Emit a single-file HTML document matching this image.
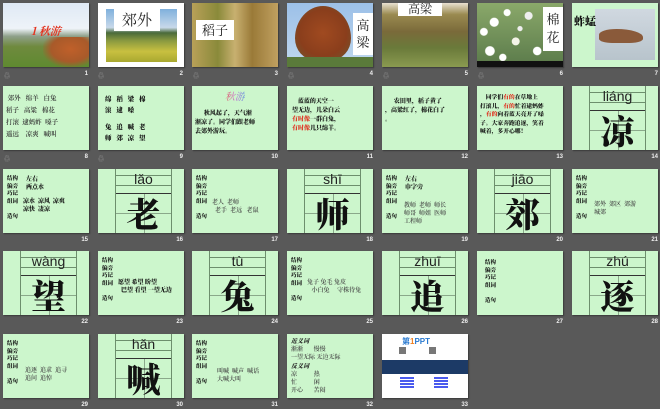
<!DOCTYPE html>
<html><head><meta charset="utf-8">
<style>
*{margin:0;padding:0;box-sizing:border-box}
body{width:660px;height:409px;background:#595959;position:relative;overflow:hidden;font-family:"Liberation Sans","Noto Sans CJK SC",sans-serif}
.s{position:absolute;width:86px;height:64px;overflow:hidden;box-shadow:1px 1px 1px #3a3a3a}
.g{background:#ccf6cc}
.n{position:absolute;width:86px;text-align:right;font-size:6px;color:#eee;font-weight:bold}
.ic{position:absolute;font-size:6px;color:#bbb}
.tz{position:absolute;left:17px;width:57px;top:0;bottom:0;border-left:1px solid #6d8f6d;border-right:1px solid #6d8f6d;
background:linear-gradient(#6d8f6d,#6d8f6d) 0 6px/100% 1px no-repeat,linear-gradient(#6d8f6d,#6d8f6d) 0 16px/100% 1px no-repeat,linear-gradient(#333,#333) 0 24px/100% 1px no-repeat,linear-gradient(#8aa88a,#8aa88a) 28px 24px/1px 40px no-repeat,linear-gradient(#8aa88a,#8aa88a) 0 44px/100% 1px no-repeat}
.py{position:absolute;top:3px;width:100%;text-align:center;font-size:14px;line-height:14px;color:#222}
.ch{position:absolute;top:24px;width:100%;text-align:center;font-size:34px;line-height:40px;font-family:"Noto Serif CJK SC","Noto Sans CJK SC",serif;font-weight:900;color:#111}
.inf{position:absolute;left:4px;top:6px;font-size:5.5px;line-height:7.5px;font-weight:900;font-family:"Noto Serif CJK SC",serif;color:#111}
.t{position:absolute;font-size:6px;line-height:7.5px;color:#444;font-family:"Noto Serif CJK SC",serif;white-space:nowrap;font-weight:600}
.b{color:#111;font-weight:900}
.r{color:#e02a1a}
.lab{position:absolute;background:#fff;font-family:"Noto Serif CJK SC",serif;color:#222;text-align:center}
</style></head><body>

<!-- Row 0 -->
<div class="s" style="left:3px;top:3px;background:linear-gradient(#dfe9f5 0%,#eef3f8 40%,#8fa08a 52%,#6f8a3e 68%,#5f8a30 100%)">
 <div style="position:absolute;left:40px;top:34px;width:46px;height:30px;background:radial-gradient(ellipse at 60% 40%,#c0602a,#a85a2a 50%,transparent 75%)"></div>
 <div style="position:absolute;left:0;top:20px;width:86px;text-align:center;font-size:11px;font-weight:bold;font-style:italic;color:#e3331f;font-family:'Noto Serif CJK SC',serif">1 秋游</div>
</div>
<div class="ic" style="left:4px;top:71px">♲</div><div class="n" style="left:2px;top:71px">1</div>

<div class="s" style="left:98px;top:3px;background:#fff">
 <div style="position:absolute;left:8px;top:6px;width:71px;height:53px;background:linear-gradient(#7fb0dc 0%,#c8d9ea 35%,#4a6a3a 45%,#8a9a40 60%,#c8c040 80%,#a8a830 100%)"></div>
 <div class="lab" style="left:16px;top:6px;width:46px;height:22px;font-size:15px;line-height:22px">郊外</div>
</div>
<div class="ic" style="left:98px;top:71px">♲</div><div class="n" style="left:97px;top:71px">2</div>

<div class="s" style="left:192px;top:3px;background:linear-gradient(90deg,#b8a058,#8a8a3a 30%,#c8b070 50%,#9a7a38 70%,#c0a060)">
 <div class="lab" style="left:4px;top:17px;width:38px;height:20px;font-size:13px;line-height:20px">稻子</div>
</div>
<div class="ic" style="left:193px;top:71px">♲</div><div class="n" style="left:192px;top:71px">3</div>

<div class="s" style="left:287px;top:3px;background:linear-gradient(#9cc0e8,#c0d8ee)">
 <div style="position:absolute;left:8px;top:3px;width:56px;height:54px;border-radius:50% 50% 35% 35%/60% 60% 40% 40%;background:radial-gradient(#a04a20,#8a3e1c 60%,#6a5a30)"></div>
 <div style="position:absolute;left:0;top:54px;width:86px;height:10px;background:#5a7a3a"></div>
 <div class="lab" style="left:66px;top:10px;width:20px;height:42px;font-size:13px;line-height:17px;padding-top:3px">高<br>梁</div>
</div>
<div class="ic" style="left:288px;top:71px">♲</div><div class="n" style="left:287px;top:71px">4</div>

<div class="s" style="left:382px;top:3px;background:linear-gradient(#e8e0d0 0%,#9a8a50 18%,#7a6a3a 45%,#6a7a3a 70%,#8a9a50 100%)">
 <div class="lab" style="left:16px;top:0;width:44px;height:13px;font-size:12px;line-height:12px">高梁</div>
</div>
<div class="ic" style="left:383px;top:71px">♲</div><div class="n" style="left:382px;top:71px">5</div>

<div class="s" style="left:477px;top:3px;background:radial-gradient(circle at 20% 30%,#fff 0 5%,transparent 6%),radial-gradient(circle at 45% 60%,#f4f4e8 0 6%,transparent 7%),radial-gradient(circle at 15% 75%,#fff 0 5%,transparent 6%),radial-gradient(circle at 60% 20%,#eee 0 5%,transparent 6%),radial-gradient(circle at 35% 15%,#fff 0 4%,transparent 5%),radial-gradient(circle at 70% 75%,#fff 0 5%,transparent 6%),radial-gradient(circle at 8% 45%,#fff 0 4%,transparent 5%),radial-gradient(circle at 50% 40%,#eee 0 4%,transparent 5%),radial-gradient(circle at 30% 85%,#fff 0 4%,transparent 5%),linear-gradient(#8aa86a,#5a7a4a)">
 <div style="position:absolute;left:0;top:58px;width:86px;height:6px;background:#111"></div>
 <div class="lab" style="left:66px;top:4px;width:20px;height:44px;font-size:13px;line-height:18px;padding-top:3px">棉<br>花</div>
</div>
<div class="ic" style="left:478px;top:71px">♲</div><div class="n" style="left:477px;top:71px">6</div>

<div class="s g" style="left:572px;top:3px">
 <div style="position:absolute;left:23px;top:6px;width:60px;height:51px;background:linear-gradient(#d0d8e0,#b8c4cc)"><div style="position:absolute;left:4px;top:20px;width:44px;height:14px;border-radius:40% 60% 30% 30%;background:#8a5a3a"></div></div>
 <div style="position:absolute;left:2px;top:10px;font-size:11px;font-weight:900;font-family:'Noto Serif CJK SC',serif;color:#111">蚱蜢</div>
</div>
<div class="n" style="left:572px;top:71px">7</div>

<!-- Row 1 -->
<div class="s g" style="left:3px;top:86px">
 <div class="t" style="left:3px;top:6px;color:#333;font-size:6.5px;line-height:12px">&nbsp;郊外&nbsp;&nbsp;&nbsp;绵羊&nbsp;&nbsp;&nbsp;白兔<br>稻子&nbsp;&nbsp;&nbsp;高粱&nbsp;&nbsp;&nbsp;棉花<br>打滚&nbsp;&nbsp;逮蚂蚱&nbsp;&nbsp;嗓子<br>遥远&nbsp;&nbsp;&nbsp;&nbsp;凉爽&nbsp;&nbsp;&nbsp;喊叫</div>
</div>
<div class="ic" style="left:4px;top:154px">♲</div><div class="n" style="left:2px;top:154px">8</div>

<div class="s g" style="left:98px;top:86px">
 <div class="t b" style="left:7px;top:7px;font-size:6.5px;line-height:11px">绵&nbsp;&nbsp;&nbsp;稻&nbsp;&nbsp;&nbsp;梁&nbsp;&nbsp;&nbsp;棉<br>滚&nbsp;&nbsp;&nbsp;逮&nbsp;&nbsp;&nbsp;嗓</div>
 <div class="t b" style="left:7px;top:35px;font-size:6.5px;line-height:11px">兔&nbsp;&nbsp;&nbsp;追&nbsp;&nbsp;&nbsp;喊&nbsp;&nbsp;&nbsp;老<br>师&nbsp;&nbsp;&nbsp;郊&nbsp;&nbsp;&nbsp;凉&nbsp;&nbsp;&nbsp;望</div>
</div>
<div class="ic" style="left:98px;top:154px">♲</div><div class="n" style="left:97px;top:154px">9</div>

<div class="s g" style="left:192px;top:86px">
 <div style="position:absolute;left:33px;top:2px;font-size:10px;font-style:italic;font-family:'Noto Serif CJK SC',serif;background:linear-gradient(90deg,#e05050,#d070d0,#5080e0);-webkit-background-clip:text;color:transparent">秋游</div>
 <div class="t b" style="left:3px;top:22px;font-size:6px;line-height:9px">&nbsp;&nbsp;&nbsp;&nbsp;&nbsp;&nbsp;秋风起了，天气渐<br>渐凉了。同学们跟老师<br>去郊外游玩。</div>
</div>
<div class="n" style="left:192px;top:154px">10</div>

<div class="s g" style="left:287px;top:86px">
 <div class="t b" style="left:5px;top:10px;font-size:6px;line-height:9px">&nbsp;&nbsp;&nbsp;&nbsp;蓝蓝的天空一<br>望无边，几朵白云<br><span class="r">有时像</span>一群白兔，<br><span class="r">有时像</span>几只绵羊。</div>
</div>
<div class="n" style="left:287px;top:154px">11</div>

<div class="s g" style="left:382px;top:86px">
 <div class="t b" style="left:3px;top:10px;font-size:6px;line-height:9px">&nbsp;&nbsp;&nbsp;&nbsp;&nbsp;&nbsp;农田里，稻子黄了<br>，高粱红了，棉花白了<br>。</div>
</div>
<div class="n" style="left:382px;top:154px">12</div>

<div class="s g" style="left:477px;top:86px">
 <div class="t b" style="left:3px;top:7px;font-size:5.8px;line-height:8.5px">&nbsp;&nbsp;&nbsp;&nbsp;同学们<span class="r">有的</span>在草地上<br>打滚儿，<span class="r">有的</span>忙着逮蚂蚱<br>，<span class="r">有的</span>向着蓝天亮开了嗓<br>子。大家奔跑追逐，笑着<br>喊着，多开心哪！</div>
</div>
<div class="n" style="left:477px;top:154px">13</div>

<div class="s g" style="left:572px;top:86px"><div class="tz"><div class="py">liáng</div><div class="ch">凉</div></div></div>
<div class="n" style="left:572px;top:154px">14</div>

<!-- Row 2 -->
<div class="s g" style="left:3px;top:169px">
 <div class="inf">结构<br>偏旁<br>巧记<br>组词<br><br>造句</div>
 <div class="t b" style="left:23px;top:6px">左右<br>两点水</div>
 <div class="t b" style="left:20px;top:28px;line-height:8px">凉水&nbsp;&nbsp;凉风&nbsp;&nbsp;凉爽<br>凉快&nbsp;&nbsp;凄凉</div>
</div>
<div class="n" style="left:2px;top:237px">15</div>

<div class="s g" style="left:98px;top:169px"><div class="tz"><div class="py">lǎo</div><div class="ch">老</div></div></div>
<div class="n" style="left:97px;top:237px">16</div>

<div class="s g" style="left:192px;top:169px">
 <div class="inf">结构<br>偏旁<br>巧记<br>组词<br><br>造句</div>
 <div class="t" style="left:20px;top:29px;line-height:8px">老人&nbsp;&nbsp;老师<br>&nbsp;&nbsp;老手&nbsp;&nbsp;老远&nbsp;&nbsp;&nbsp;老鼠</div>
</div>
<div class="n" style="left:192px;top:237px">17</div>

<div class="s g" style="left:287px;top:169px"><div class="tz"><div class="py">shī</div><div class="ch">师</div></div></div>
<div class="n" style="left:287px;top:237px">18</div>

<div class="s g" style="left:382px;top:169px">
 <div class="inf">结构<br>偏旁<br>巧记<br>组词<br><br>造句</div>
 <div class="t b" style="left:23px;top:6px">左右<br>巾字旁</div>
 <div class="t" style="left:22px;top:32px;line-height:8px">教师&nbsp;&nbsp;老师&nbsp;&nbsp;师长<br>师哥&nbsp;&nbsp;师姐&nbsp;&nbsp;医师<br>工程师</div>
</div>
<div class="n" style="left:382px;top:237px">19</div>

<div class="s g" style="left:477px;top:169px"><div class="tz"><div class="py">jiāo</div><div class="ch">郊</div></div></div>
<div class="n" style="left:477px;top:237px">20</div>

<div class="s g" style="left:572px;top:169px">
 <div class="inf">结构<br>偏旁<br>巧记<br>组词<br><br>造句</div>
 <div class="t" style="left:22px;top:31px;line-height:8px">郊外&nbsp;&nbsp;郊区&nbsp;&nbsp;郊游<br>城郊</div>
</div>
<div class="n" style="left:572px;top:237px">21</div>

<!-- Row 3 -->
<div class="s g" style="left:3px;top:251px"><div class="tz"><div class="py">wàng</div><div class="ch">望</div></div></div>
<div class="n" style="left:2px;top:319px">22</div>

<div class="s g" style="left:98px;top:251px">
 <div class="inf">结构<br>偏旁<br>巧记<br>组词<br><br>造句</div>
 <div class="t b" style="left:20px;top:27px;line-height:8px">愿望&nbsp;希望&nbsp;盼望<br>&nbsp;&nbsp;巴望&nbsp;看望&nbsp;一望无边</div>
</div>
<div class="n" style="left:97px;top:319px">23</div>

<div class="s g" style="left:192px;top:251px"><div class="tz"><div class="py">tù</div><div class="ch">兔</div></div></div>
<div class="n" style="left:192px;top:319px">24</div>

<div class="s g" style="left:287px;top:251px">
 <div class="inf">结构<br>偏旁<br>巧记<br>组词<br><br>造句</div>
 <div class="t" style="left:20px;top:27px;line-height:8px">兔子&nbsp;兔毛&nbsp;兔皮<br>&nbsp;&nbsp;&nbsp;小白兔&nbsp;&nbsp;&nbsp;&nbsp;&nbsp;守株待兔</div>
</div>
<div class="n" style="left:287px;top:319px">25</div>

<div class="s g" style="left:382px;top:251px"><div class="tz"><div class="py">zhuī</div><div class="ch">追</div></div></div>
<div class="n" style="left:382px;top:319px">26</div>

<div class="s g" style="left:477px;top:251px">
 <div class="inf" style="left:8px;top:8px">结构<br>偏旁<br>巧记<br>组词<br><br>造句</div>
</div>
<div class="n" style="left:477px;top:319px">27</div>

<div class="s g" style="left:572px;top:251px"><div class="tz"><div class="py">zhú</div><div class="ch">逐</div></div></div>
<div class="n" style="left:572px;top:319px">28</div>

<!-- Row 4 -->
<div class="s g" style="left:3px;top:334px">
 <div class="inf">结构<br>偏旁<br>巧记<br>组词<br><br>造句</div>
 <div class="t" style="left:22px;top:32px;line-height:8px">追逐&nbsp;&nbsp;追求&nbsp;&nbsp;追寻<br>追问&nbsp;&nbsp;追悼</div>
</div>
<div class="n" style="left:2px;top:402px">29</div>

<div class="s g" style="left:98px;top:334px"><div class="tz"><div class="py">hǎn</div><div class="ch">喊</div></div></div>
<div class="n" style="left:97px;top:402px">30</div>

<div class="s g" style="left:192px;top:334px">
 <div class="inf">结构<br>偏旁<br>巧记<br>组词<br><br>造句</div>
 <div class="t" style="left:25px;top:33px;line-height:8px">叫喊&nbsp;&nbsp;喊声&nbsp;&nbsp;喊话<br>大喊大叫</div>
</div>
<div class="n" style="left:192px;top:402px">31</div>

<div class="s g" style="left:287px;top:334px">
 <div class="t" style="left:4px;top:3px;line-height:8.2px;color:#444"><b style="font-style:italic;color:#222">近义词</b><br>渐渐&nbsp;&nbsp;&nbsp;&nbsp;&nbsp;&nbsp;&nbsp;慢慢<br>一望无际&nbsp;无边无际<br><b style="font-style:italic;color:#222">反义词</b><br>凉&nbsp;&nbsp;&nbsp;&nbsp;&nbsp;&nbsp;&nbsp;&nbsp;&nbsp;&nbsp;&nbsp;热<br>忙&nbsp;&nbsp;&nbsp;&nbsp;&nbsp;&nbsp;&nbsp;&nbsp;&nbsp;&nbsp;&nbsp;闲<br>开心&nbsp;&nbsp;&nbsp;&nbsp;&nbsp;&nbsp;&nbsp;苦闷</div>
</div>
<div class="n" style="left:287px;top:402px">32</div>

<div class="s" style="left:382px;top:334px;background:#fff">
 <div style="position:absolute;left:20px;top:2px;font-size:8px;font-weight:bold;color:#2a7ad0">第<span style="color:#f08020">1</span>PPT</div>
 <div style="position:absolute;left:17px;top:13px;width:7px;height:7px;background:#777"></div>
 <div style="position:absolute;left:47px;top:13px;width:7px;height:7px;background:#777"></div>
 <div style="position:absolute;left:0;top:26px;width:86px;height:14px;background:#1c3a66"></div>
 <div style="position:absolute;left:18px;top:43px;width:14px;height:12px;background:repeating-linear-gradient(#4a5aee 0 2px,#fff 2px 3px)"></div>
 <div style="position:absolute;left:52px;top:43px;width:14px;height:12px;background:repeating-linear-gradient(#4a5aee 0 2px,#fff 2px 3px)"></div>
</div>
<div class="n" style="left:382px;top:402px">33</div>

</body></html>
